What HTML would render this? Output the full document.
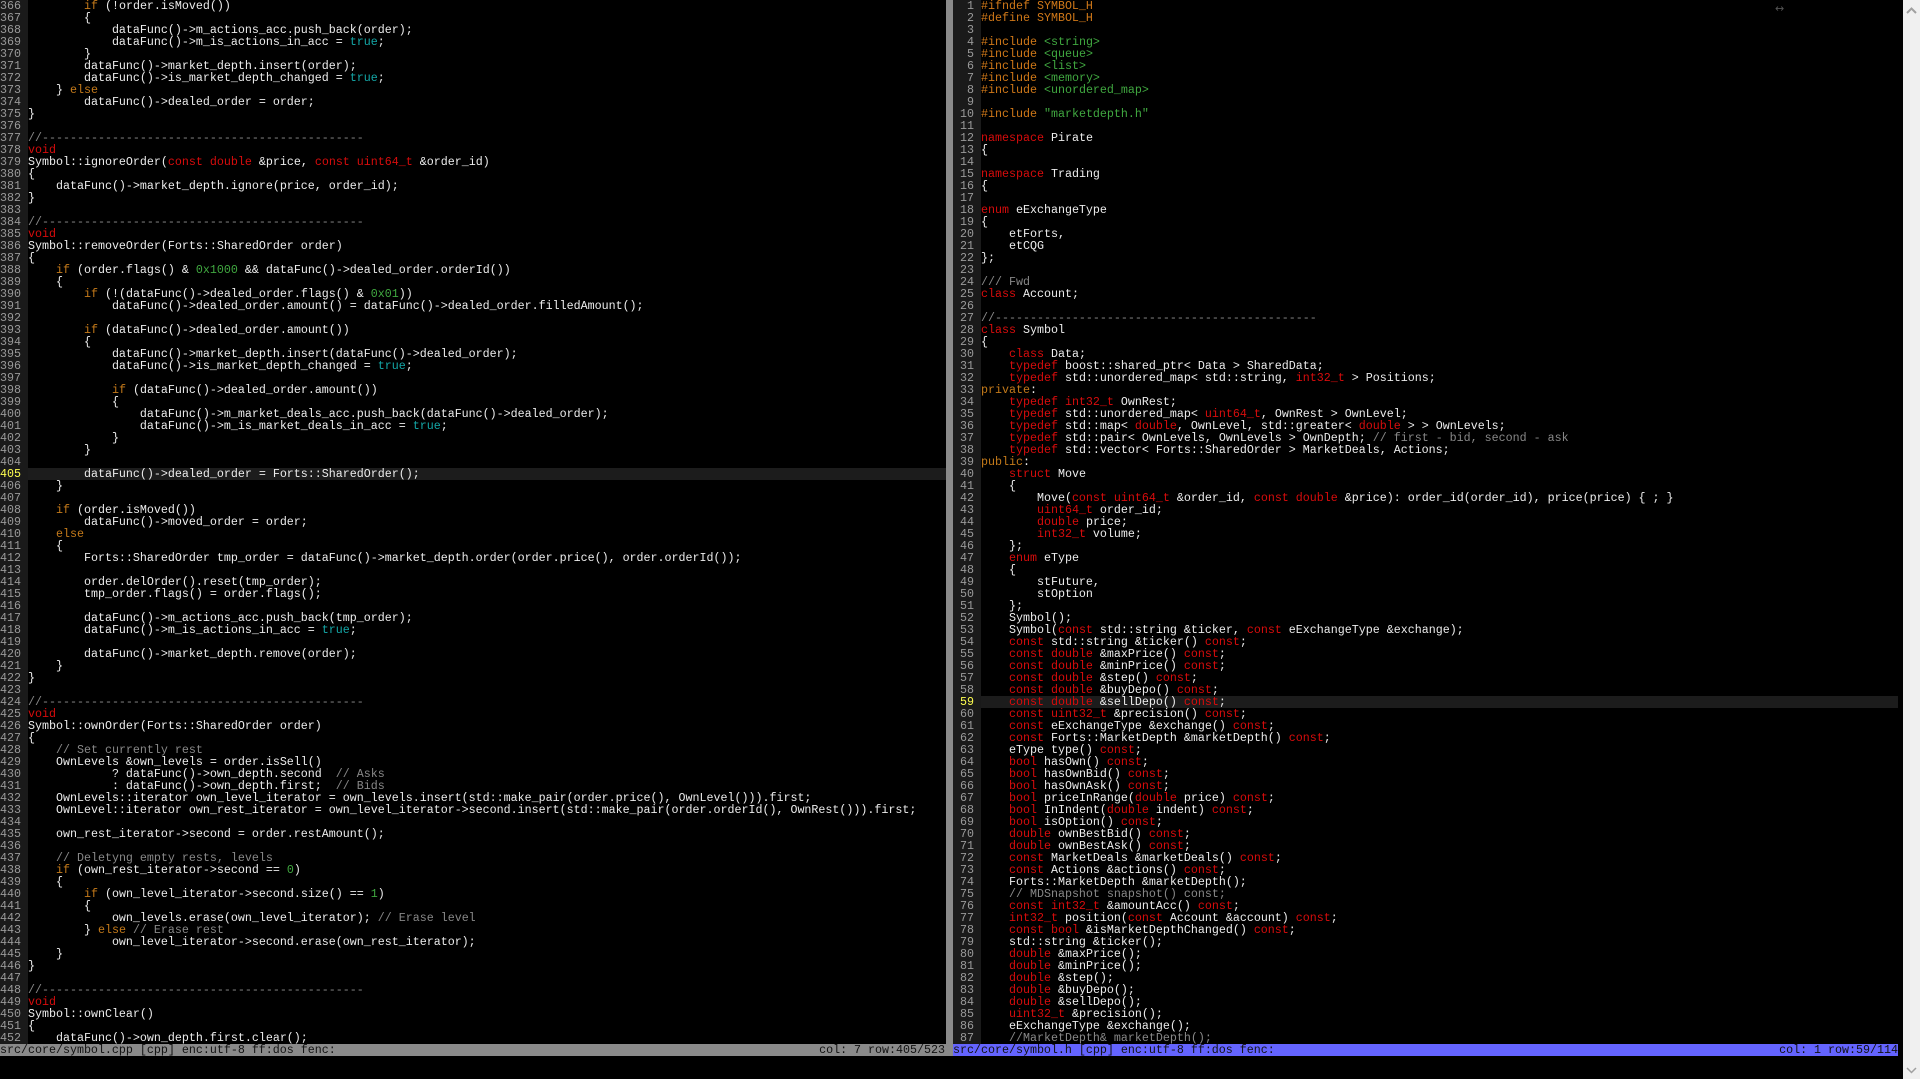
<!DOCTYPE html>
<html><head><meta charset="utf-8"><style>
html,body{margin:0;padding:0;background:#000;width:1920px;height:1079px;overflow:hidden}
body{font-family:"Liberation Mono",monospace;font-size:11.67px;color:#ececec;position:relative}
.pane{position:absolute;top:0;height:1044px;overflow:hidden}
.l{height:12px;line-height:12px;white-space:pre;display:flex}
.g{width:28px;flex:none;background:#1a1a1a;color:#9a9a9a;text-align:right;box-sizing:border-box;padding-right:7px}
.x{flex:1;white-space:pre}
.cur .x{background:#1c1c1c}
.cur .g{color:#ffff50}
.k{color:#d80c0c}.c{color:#c47a1a}.t{color:#14a8a8}.m{color:#888}.n{color:#40a840}.p{color:#d07818}
#sep{position:absolute;left:946px;top:0;width:7px;height:1044px;background:#8a8a8a}
.st{position:absolute;top:1044px;height:12px;line-height:12px;color:#111;white-space:pre}
#scroll{position:absolute;left:1903px;top:0;width:17px;height:1079px;background:#f0f0f0}
</style></head><body>
<div class="pane" style="left:0;width:946px">
<div class="l"><span class="g">366</span><span class="x">        <span class="c">if</span> (!order.isMoved())</span></div>
<div class="l"><span class="g">367</span><span class="x">        {</span></div>
<div class="l"><span class="g">368</span><span class="x">            dataFunc()-&gt;m_actions_acc.push_back(order);</span></div>
<div class="l"><span class="g">369</span><span class="x">            dataFunc()-&gt;m_is_actions_in_acc = <span class="t">true</span>;</span></div>
<div class="l"><span class="g">370</span><span class="x">        }</span></div>
<div class="l"><span class="g">371</span><span class="x">        dataFunc()-&gt;market_depth.insert(order);</span></div>
<div class="l"><span class="g">372</span><span class="x">        dataFunc()-&gt;is_market_depth_changed = <span class="t">true</span>;</span></div>
<div class="l"><span class="g">373</span><span class="x">    } <span class="c">else</span></span></div>
<div class="l"><span class="g">374</span><span class="x">        dataFunc()-&gt;dealed_order = order;</span></div>
<div class="l"><span class="g">375</span><span class="x">}</span></div>
<div class="l"><span class="g">376</span><span class="x"></span></div>
<div class="l"><span class="g">377</span><span class="x"><span class="m">//----------------------------------------------</span></span></div>
<div class="l"><span class="g">378</span><span class="x"><span class="k">void</span></span></div>
<div class="l"><span class="g">379</span><span class="x">Symbol::ignoreOrder(<span class="k">const double</span> &amp;price, <span class="k">const uint64_t</span> &amp;order_id)</span></div>
<div class="l"><span class="g">380</span><span class="x">{</span></div>
<div class="l"><span class="g">381</span><span class="x">    dataFunc()-&gt;market_depth.ignore(price, order_id);</span></div>
<div class="l"><span class="g">382</span><span class="x">}</span></div>
<div class="l"><span class="g">383</span><span class="x"></span></div>
<div class="l"><span class="g">384</span><span class="x"><span class="m">//----------------------------------------------</span></span></div>
<div class="l"><span class="g">385</span><span class="x"><span class="k">void</span></span></div>
<div class="l"><span class="g">386</span><span class="x">Symbol::removeOrder(Forts::SharedOrder order)</span></div>
<div class="l"><span class="g">387</span><span class="x">{</span></div>
<div class="l"><span class="g">388</span><span class="x">    <span class="c">if</span> (order.flags() &amp; <span class="n">0x1000</span> &amp;&amp; dataFunc()-&gt;dealed_order.orderId())</span></div>
<div class="l"><span class="g">389</span><span class="x">    {</span></div>
<div class="l"><span class="g">390</span><span class="x">        <span class="c">if</span> (!(dataFunc()-&gt;dealed_order.flags() &amp; <span class="n">0x01</span>))</span></div>
<div class="l"><span class="g">391</span><span class="x">            dataFunc()-&gt;dealed_order.amount() = dataFunc()-&gt;dealed_order.filledAmount();</span></div>
<div class="l"><span class="g">392</span><span class="x"></span></div>
<div class="l"><span class="g">393</span><span class="x">        <span class="c">if</span> (dataFunc()-&gt;dealed_order.amount())</span></div>
<div class="l"><span class="g">394</span><span class="x">        {</span></div>
<div class="l"><span class="g">395</span><span class="x">            dataFunc()-&gt;market_depth.insert(dataFunc()-&gt;dealed_order);</span></div>
<div class="l"><span class="g">396</span><span class="x">            dataFunc()-&gt;is_market_depth_changed = <span class="t">true</span>;</span></div>
<div class="l"><span class="g">397</span><span class="x"></span></div>
<div class="l"><span class="g">398</span><span class="x">            <span class="c">if</span> (dataFunc()-&gt;dealed_order.amount())</span></div>
<div class="l"><span class="g">399</span><span class="x">            {</span></div>
<div class="l"><span class="g">400</span><span class="x">                dataFunc()-&gt;m_market_deals_acc.push_back(dataFunc()-&gt;dealed_order);</span></div>
<div class="l"><span class="g">401</span><span class="x">                dataFunc()-&gt;m_is_market_deals_in_acc = <span class="t">true</span>;</span></div>
<div class="l"><span class="g">402</span><span class="x">            }</span></div>
<div class="l"><span class="g">403</span><span class="x">        }</span></div>
<div class="l"><span class="g">404</span><span class="x"></span></div>
<div class="l cur"><span class="g">405</span><span class="x">        dataFunc()-&gt;dealed_order = Forts::SharedOrder();</span></div>
<div class="l"><span class="g">406</span><span class="x">    }</span></div>
<div class="l"><span class="g">407</span><span class="x"></span></div>
<div class="l"><span class="g">408</span><span class="x">    <span class="c">if</span> (order.isMoved())</span></div>
<div class="l"><span class="g">409</span><span class="x">        dataFunc()-&gt;moved_order = order;</span></div>
<div class="l"><span class="g">410</span><span class="x">    <span class="c">else</span></span></div>
<div class="l"><span class="g">411</span><span class="x">    {</span></div>
<div class="l"><span class="g">412</span><span class="x">        Forts::SharedOrder tmp_order = dataFunc()-&gt;market_depth.order(order.price(), order.orderId());</span></div>
<div class="l"><span class="g">413</span><span class="x"></span></div>
<div class="l"><span class="g">414</span><span class="x">        order.delOrder().reset(tmp_order);</span></div>
<div class="l"><span class="g">415</span><span class="x">        tmp_order.flags() = order.flags();</span></div>
<div class="l"><span class="g">416</span><span class="x"></span></div>
<div class="l"><span class="g">417</span><span class="x">        dataFunc()-&gt;m_actions_acc.push_back(tmp_order);</span></div>
<div class="l"><span class="g">418</span><span class="x">        dataFunc()-&gt;m_is_actions_in_acc = <span class="t">true</span>;</span></div>
<div class="l"><span class="g">419</span><span class="x"></span></div>
<div class="l"><span class="g">420</span><span class="x">        dataFunc()-&gt;market_depth.remove(order);</span></div>
<div class="l"><span class="g">421</span><span class="x">    }</span></div>
<div class="l"><span class="g">422</span><span class="x">}</span></div>
<div class="l"><span class="g">423</span><span class="x"></span></div>
<div class="l"><span class="g">424</span><span class="x"><span class="m">//----------------------------------------------</span></span></div>
<div class="l"><span class="g">425</span><span class="x"><span class="k">void</span></span></div>
<div class="l"><span class="g">426</span><span class="x">Symbol::ownOrder(Forts::SharedOrder order)</span></div>
<div class="l"><span class="g">427</span><span class="x">{</span></div>
<div class="l"><span class="g">428</span><span class="x">    <span class="m">// Set currently rest</span></span></div>
<div class="l"><span class="g">429</span><span class="x">    OwnLevels &amp;own_levels = order.isSell()</span></div>
<div class="l"><span class="g">430</span><span class="x">            ? dataFunc()-&gt;own_depth.second  <span class="m">// Asks</span></span></div>
<div class="l"><span class="g">431</span><span class="x">            : dataFunc()-&gt;own_depth.first;  <span class="m">// Bids</span></span></div>
<div class="l"><span class="g">432</span><span class="x">    OwnLevels::iterator own_level_iterator = own_levels.insert(std::make_pair(order.price(), OwnLevel())).first;</span></div>
<div class="l"><span class="g">433</span><span class="x">    OwnLevel::iterator own_rest_iterator = own_level_iterator-&gt;second.insert(std::make_pair(order.orderId(), OwnRest())).first;</span></div>
<div class="l"><span class="g">434</span><span class="x"></span></div>
<div class="l"><span class="g">435</span><span class="x">    own_rest_iterator-&gt;second = order.restAmount();</span></div>
<div class="l"><span class="g">436</span><span class="x"></span></div>
<div class="l"><span class="g">437</span><span class="x">    <span class="m">// Deletyng empty rests, levels</span></span></div>
<div class="l"><span class="g">438</span><span class="x">    <span class="c">if</span> (own_rest_iterator-&gt;second == <span class="n">0</span>)</span></div>
<div class="l"><span class="g">439</span><span class="x">    {</span></div>
<div class="l"><span class="g">440</span><span class="x">        <span class="c">if</span> (own_level_iterator-&gt;second.size() == <span class="n">1</span>)</span></div>
<div class="l"><span class="g">441</span><span class="x">        {</span></div>
<div class="l"><span class="g">442</span><span class="x">            own_levels.erase(own_level_iterator); <span class="m">// Erase level</span></span></div>
<div class="l"><span class="g">443</span><span class="x">        } <span class="c">else</span> <span class="m">// Erase rest</span></span></div>
<div class="l"><span class="g">444</span><span class="x">            own_level_iterator-&gt;second.erase(own_rest_iterator);</span></div>
<div class="l"><span class="g">445</span><span class="x">    }</span></div>
<div class="l"><span class="g">446</span><span class="x">}</span></div>
<div class="l"><span class="g">447</span><span class="x"></span></div>
<div class="l"><span class="g">448</span><span class="x"><span class="m">//----------------------------------------------</span></span></div>
<div class="l"><span class="g">449</span><span class="x"><span class="k">void</span></span></div>
<div class="l"><span class="g">450</span><span class="x">Symbol::ownClear()</span></div>
<div class="l"><span class="g">451</span><span class="x">{</span></div>
<div class="l"><span class="g">452</span><span class="x">    dataFunc()-&gt;own_depth.first.clear();</span></div>
</div>
<div id="sep"></div>
<div class="pane" style="left:953px;width:945px">
<div class="l"><span class="g">1</span><span class="x"><span class="p">#ifndef SYMBOL_H</span></span></div>
<div class="l"><span class="g">2</span><span class="x"><span class="p">#define SYMBOL_H</span></span></div>
<div class="l"><span class="g">3</span><span class="x"></span></div>
<div class="l"><span class="g">4</span><span class="x"><span class="p">#include</span> <span class="n">&lt;string&gt;</span></span></div>
<div class="l"><span class="g">5</span><span class="x"><span class="p">#include</span> <span class="n">&lt;queue&gt;</span></span></div>
<div class="l"><span class="g">6</span><span class="x"><span class="p">#include</span> <span class="n">&lt;list&gt;</span></span></div>
<div class="l"><span class="g">7</span><span class="x"><span class="p">#include</span> <span class="n">&lt;memory&gt;</span></span></div>
<div class="l"><span class="g">8</span><span class="x"><span class="p">#include</span> <span class="n">&lt;unordered_map&gt;</span></span></div>
<div class="l"><span class="g">9</span><span class="x"></span></div>
<div class="l"><span class="g">10</span><span class="x"><span class="p">#include</span> <span class="n">"marketdepth.h"</span></span></div>
<div class="l"><span class="g">11</span><span class="x"></span></div>
<div class="l"><span class="g">12</span><span class="x"><span class="k">namespace</span> Pirate</span></div>
<div class="l"><span class="g">13</span><span class="x">{</span></div>
<div class="l"><span class="g">14</span><span class="x"></span></div>
<div class="l"><span class="g">15</span><span class="x"><span class="k">namespace</span> Trading</span></div>
<div class="l"><span class="g">16</span><span class="x">{</span></div>
<div class="l"><span class="g">17</span><span class="x"></span></div>
<div class="l"><span class="g">18</span><span class="x"><span class="k">enum</span> eExchangeType</span></div>
<div class="l"><span class="g">19</span><span class="x">{</span></div>
<div class="l"><span class="g">20</span><span class="x">    etForts,</span></div>
<div class="l"><span class="g">21</span><span class="x">    etCQG</span></div>
<div class="l"><span class="g">22</span><span class="x">};</span></div>
<div class="l"><span class="g">23</span><span class="x"></span></div>
<div class="l"><span class="g">24</span><span class="x"><span class="m">/// Fwd</span></span></div>
<div class="l"><span class="g">25</span><span class="x"><span class="k">class</span> Account;</span></div>
<div class="l"><span class="g">26</span><span class="x"></span></div>
<div class="l"><span class="g">27</span><span class="x"><span class="m">//----------------------------------------------</span></span></div>
<div class="l"><span class="g">28</span><span class="x"><span class="k">class</span> Symbol</span></div>
<div class="l"><span class="g">29</span><span class="x">{</span></div>
<div class="l"><span class="g">30</span><span class="x">    <span class="k">class</span> Data;</span></div>
<div class="l"><span class="g">31</span><span class="x">    <span class="k">typedef</span> boost::shared_ptr&lt; Data &gt; SharedData;</span></div>
<div class="l"><span class="g">32</span><span class="x">    <span class="k">typedef</span> std::unordered_map&lt; std::string, <span class="k">int32_t</span> &gt; Positions;</span></div>
<div class="l"><span class="g">33</span><span class="x"><span class="c">private</span>:</span></div>
<div class="l"><span class="g">34</span><span class="x">    <span class="k">typedef int32_t</span> OwnRest;</span></div>
<div class="l"><span class="g">35</span><span class="x">    <span class="k">typedef</span> std::unordered_map&lt; <span class="k">uint64_t</span>, OwnRest &gt; OwnLevel;</span></div>
<div class="l"><span class="g">36</span><span class="x">    <span class="k">typedef</span> std::map&lt; <span class="k">double</span>, OwnLevel, std::greater&lt; <span class="k">double</span> &gt; &gt; OwnLevels;</span></div>
<div class="l"><span class="g">37</span><span class="x">    <span class="k">typedef</span> std::pair&lt; OwnLevels, OwnLevels &gt; OwnDepth; <span class="m">// first - bid, second - ask</span></span></div>
<div class="l"><span class="g">38</span><span class="x">    <span class="k">typedef</span> std::vector&lt; Forts::SharedOrder &gt; MarketDeals, Actions;</span></div>
<div class="l"><span class="g">39</span><span class="x"><span class="c">public</span>:</span></div>
<div class="l"><span class="g">40</span><span class="x">    <span class="k">struct</span> Move</span></div>
<div class="l"><span class="g">41</span><span class="x">    {</span></div>
<div class="l"><span class="g">42</span><span class="x">        Move(<span class="k">const uint64_t</span> &amp;order_id, <span class="k">const double</span> &amp;price): order_id(order_id), price(price) { ; }</span></div>
<div class="l"><span class="g">43</span><span class="x">        <span class="k">uint64_t</span> order_id;</span></div>
<div class="l"><span class="g">44</span><span class="x">        <span class="k">double</span> price;</span></div>
<div class="l"><span class="g">45</span><span class="x">        <span class="k">int32_t</span> volume;</span></div>
<div class="l"><span class="g">46</span><span class="x">    };</span></div>
<div class="l"><span class="g">47</span><span class="x">    <span class="k">enum</span> eType</span></div>
<div class="l"><span class="g">48</span><span class="x">    {</span></div>
<div class="l"><span class="g">49</span><span class="x">        stFuture,</span></div>
<div class="l"><span class="g">50</span><span class="x">        stOption</span></div>
<div class="l"><span class="g">51</span><span class="x">    };</span></div>
<div class="l"><span class="g">52</span><span class="x">    Symbol();</span></div>
<div class="l"><span class="g">53</span><span class="x">    Symbol(<span class="k">const</span> std::string &amp;ticker, <span class="k">const</span> eExchangeType &amp;exchange);</span></div>
<div class="l"><span class="g">54</span><span class="x">    <span class="k">const</span> std::string &amp;ticker() <span class="k">const</span>;</span></div>
<div class="l"><span class="g">55</span><span class="x">    <span class="k">const double</span> &amp;maxPrice() <span class="k">const</span>;</span></div>
<div class="l"><span class="g">56</span><span class="x">    <span class="k">const double</span> &amp;minPrice() <span class="k">const</span>;</span></div>
<div class="l"><span class="g">57</span><span class="x">    <span class="k">const double</span> &amp;step() <span class="k">const</span>;</span></div>
<div class="l"><span class="g">58</span><span class="x">    <span class="k">const double</span> &amp;buyDepo() <span class="k">const</span>;</span></div>
<div class="l cur"><span class="g">59</span><span class="x">    <span class="k">const double</span> &amp;sellDepo() <span class="k">const</span>;</span></div>
<div class="l"><span class="g">60</span><span class="x">    <span class="k">const uint32_t</span> &amp;precision() <span class="k">const</span>;</span></div>
<div class="l"><span class="g">61</span><span class="x">    <span class="k">const</span> eExchangeType &amp;exchange() <span class="k">const</span>;</span></div>
<div class="l"><span class="g">62</span><span class="x">    <span class="k">const</span> Forts::MarketDepth &amp;marketDepth() <span class="k">const</span>;</span></div>
<div class="l"><span class="g">63</span><span class="x">    eType type() <span class="k">const</span>;</span></div>
<div class="l"><span class="g">64</span><span class="x">    <span class="k">bool</span> hasOwn() <span class="k">const</span>;</span></div>
<div class="l"><span class="g">65</span><span class="x">    <span class="k">bool</span> hasOwnBid() <span class="k">const</span>;</span></div>
<div class="l"><span class="g">66</span><span class="x">    <span class="k">bool</span> hasOwnAsk() <span class="k">const</span>;</span></div>
<div class="l"><span class="g">67</span><span class="x">    <span class="k">bool</span> priceInRange(<span class="k">double</span> price) <span class="k">const</span>;</span></div>
<div class="l"><span class="g">68</span><span class="x">    <span class="k">bool</span> InIndent(<span class="k">double</span> indent) <span class="k">const</span>;</span></div>
<div class="l"><span class="g">69</span><span class="x">    <span class="k">bool</span> isOption() <span class="k">const</span>;</span></div>
<div class="l"><span class="g">70</span><span class="x">    <span class="k">double</span> ownBestBid() <span class="k">const</span>;</span></div>
<div class="l"><span class="g">71</span><span class="x">    <span class="k">double</span> ownBestAsk() <span class="k">const</span>;</span></div>
<div class="l"><span class="g">72</span><span class="x">    <span class="k">const</span> MarketDeals &amp;marketDeals() <span class="k">const</span>;</span></div>
<div class="l"><span class="g">73</span><span class="x">    <span class="k">const</span> Actions &amp;actions() <span class="k">const</span>;</span></div>
<div class="l"><span class="g">74</span><span class="x">    Forts::MarketDepth &amp;marketDepth();</span></div>
<div class="l"><span class="g">75</span><span class="x">    <span class="m">// MDSnapshot snapshot() const;</span></span></div>
<div class="l"><span class="g">76</span><span class="x">    <span class="k">const int32_t</span> &amp;amountAcc() <span class="k">const</span>;</span></div>
<div class="l"><span class="g">77</span><span class="x">    <span class="k">int32_t</span> position(<span class="k">const</span> Account &amp;account) <span class="k">const</span>;</span></div>
<div class="l"><span class="g">78</span><span class="x">    <span class="k">const bool</span> &amp;isMarketDepthChanged() <span class="k">const</span>;</span></div>
<div class="l"><span class="g">79</span><span class="x">    std::string &amp;ticker();</span></div>
<div class="l"><span class="g">80</span><span class="x">    <span class="k">double</span> &amp;maxPrice();</span></div>
<div class="l"><span class="g">81</span><span class="x">    <span class="k">double</span> &amp;minPrice();</span></div>
<div class="l"><span class="g">82</span><span class="x">    <span class="k">double</span> &amp;step();</span></div>
<div class="l"><span class="g">83</span><span class="x">    <span class="k">double</span> &amp;buyDepo();</span></div>
<div class="l"><span class="g">84</span><span class="x">    <span class="k">double</span> &amp;sellDepo();</span></div>
<div class="l"><span class="g">85</span><span class="x">    <span class="k">uint32_t</span> &amp;precision();</span></div>
<div class="l"><span class="g">86</span><span class="x">    eExchangeType &amp;exchange();</span></div>
<div class="l"><span class="g">87</span><span class="x">    <span class="m">//MarketDepth&amp; marketDepth();</span></span></div>
</div>
<div class="st" style="left:0;width:953px;background:#8a8a8a">src/core/symbol.cpp [cpp] enc:utf-8 ff:dos fenc:<span style="position:absolute;right:8px;top:0">col: 7 row:405/523</span></div>
<div class="st" style="left:953px;width:945px;background:#6464ff">src/core/symbol.h [cpp] enc:utf-8 ff:dos fenc:<span style="position:absolute;right:0;top:0">col: 1 row:59/114</span></div>
<div style="position:absolute;left:1775px;top:2px;color:#555;font-size:11px;font-family:'DejaVu Sans',sans-serif">↔</div>
<div id="scroll">
<svg width="17" height="17" style="position:absolute;top:2px;left:0"><path d="M4 11 L8.5 6.5 L13 11" stroke="#a0a0a0" stroke-width="2" fill="none"/></svg>
<svg width="17" height="17" style="position:absolute;top:1062px;left:0"><path d="M4 6 L8.5 10.5 L13 6" stroke="#a0a0a0" stroke-width="1.5" fill="none"/></svg>
</div>
</body></html>
